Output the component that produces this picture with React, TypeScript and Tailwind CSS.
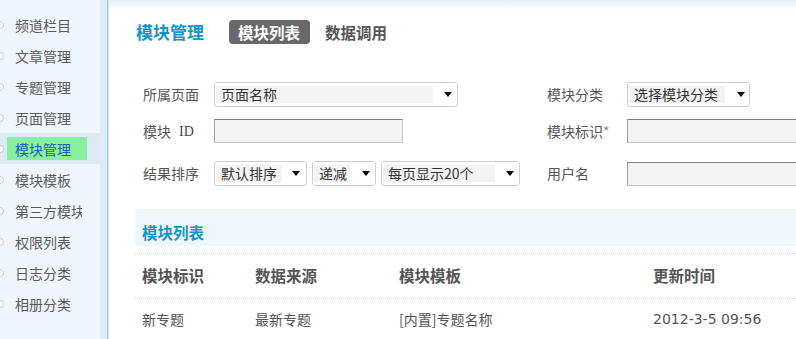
import React from "react";

const Arrow = () => (
  <span className="inline-block w-0 h-0 border-l-[4px] border-r-[4px] border-t-[5px] border-l-transparent border-r-transparent border-t-black" />
);

function Select({
  outer,
  inner,
  text,
  mr,
}: {
  outer: string;
  inner: string;
  text: string;
  mr: string;
}) {
  return (
    <div
      className={`flex items-center h-[25px] border border-[#cfcfcf] rounded-[3px] bg-white pl-[1px] shrink-0 ${outer}`}
    >
      <span
        className={`h-[17px] flex items-center pl-[5px] bg-[#f3f3f3] text-[#333] text-[14px] leading-[17px] whitespace-nowrap ${inner}`}
      >
        {text}
      </span>
      <span className={`ml-auto flex ${mr}`}>
        <Arrow />
      </span>
    </div>
  );
}

function Input({ w }: { w: string }) {
  return (
    <div
      className={`h-[24px] shrink-0 bg-[#f3f3f3] border border-[#c8c8c8] border-t-[#808080] border-l-[#a0a0a0] ${w}`}
    />
  );
}

const sideItems = [
  "频道栏目",
  "文章管理",
  "专题管理",
  "页面管理",
  "模块管理",
  "模块模板",
  "第三方模块",
  "权限列表",
  "日志分类",
  "相册分类",
];

export default function App() {
  return (
    <div className="w-[796px] h-[339px] flex overflow-hidden bg-white font-['Noto_Sans_CJK_SC','Noto_Sans',sans-serif]">
      {/* sidebar */}
      <div className="w-[100px] shrink-0 bg-[#eef6fb] pt-[9px]">
        {sideItems.map((t) => {
          const active = t === "模块管理";
          return (
            <div
              key={t}
              className={`h-[31px] flex items-center ${active ? "bg-[#dde9f5]" : ""}`}
            >
              <span className="w-[8px] h-[8px] rounded-full border border-[#c9c9c9] bg-white ml-[-4px] shrink-0" />
              <div
                className={`ml-[3px] w-[80px] h-[23px] pl-[8px] flex items-center ${active ? "bg-[#88eea0] text-[#1e5eae]" : "text-[#5a5a5a]"}`}
              >
                <span className="w-[67px] overflow-hidden whitespace-nowrap text-[14px] leading-[20px]">
                  {t}
                </span>
              </div>
            </div>
          );
        })}
      </div>
      <div className="w-[7px] shrink-0 bg-[#dfecf8]" />
      <div className="w-px shrink-0 bg-[#9ccae4]" />
      <div className="w-px shrink-0 bg-[#cfe4f2]" />

      {/* main */}
      <div className="flex-1 min-w-0 flex flex-col bg-[linear-gradient(to_bottom,#e2eef7,#ffffff_10px)]">
        {/* header */}
        <div className="pl-[27px] pt-[20px] flex items-center h-[44px]">
          <span className="text-[17px] font-bold text-[#1196cc] leading-[22px]">
            模块管理
          </span>
          <span className="ml-[25px] h-[24px] w-[81px] pl-[9px] flex items-center rounded-[4px] bg-[#686868] text-white font-bold text-[15.5px] leading-[20px]">
            模块列表
          </span>
          <span className="ml-[15px] text-[15.5px] font-bold text-[#555] leading-[20px]">
            数据调用
          </span>
        </div>

        {/* form */}
        <div className="mt-[38px] pl-[34px] text-[14px] text-[#555]">
          <div className="flex items-center h-[25px]">
            <div className="w-[404px] flex items-center shrink-0">
              <span className="w-[71px] shrink-0">所属页面</span>
              <Select outer="w-[244px]" inner="w-[217px]" text="页面名称" mr="mr-[5px]" />
            </div>
            <span className="w-[80px] shrink-0">模块分类</span>
            <Select outer="w-[123px]" inner="w-[96px]" text="选择模块分类" mr="mr-[4px]" />
          </div>
          <div className="flex items-center h-[24px] mt-[12px]">
            <div className="w-[404px] flex items-center shrink-0">
              <span className="w-[71px] shrink-0 flex items-center">
                模块
                <span className="ml-[8px] font-['Liberation_Serif',serif] text-[#445]">
                  ID
                </span>
              </span>
              <Input w="w-[189px]" />
            </div>
            <span className="w-[80px] shrink-0">
              模块标识<span className="text-[#8a8a9a]">*</span>
            </span>
            <Input w="w-[200px]" />
          </div>
          <div className="flex items-center h-[25px] mt-[18px]">
            <div className="w-[404px] flex items-center shrink-0">
              <span className="w-[71px] shrink-0">结果排序</span>
              <Select outer="w-[93px]" inner="w-[66px]" text="默认排序" mr="mr-[6px]" />
              <Select outer="ml-[5px] w-[64px]" inner="w-[36px]" text="递减" mr="mr-[5px]" />
              <Select outer="ml-[5px] w-[139px]" inner="w-[112px]" text="每页显示20个" mr="mr-[5px]" />
            </div>
            <span className="w-[80px] shrink-0">用户名</span>
            <Input w="w-[200px]" />
          </div>
        </div>

        {/* list */}
        <div className="ml-[26px] mt-[23px]">
          <div className="h-[37px] bg-[#f0f7fb] pl-[7px] pt-[8px] flex items-center">
            <span className="text-[15.5px] font-bold text-[#1196cc] leading-[20px]">
              模块列表
            </span>
          </div>
          <div className="mt-[7px] border-t border-dotted border-[#c6d8e6]">
            <div className="h-[45px] flex items-center pl-[7px] text-[15.5px] font-bold text-[#555] border-b border-dotted border-[#c6d8e6]">
              <span className="w-[113px] shrink-0">模块标识</span>
              <span className="w-[144px] shrink-0">数据来源</span>
              <span className="w-[254px] shrink-0">模块模板</span>
              <span className="shrink-0">更新时间</span>
            </div>
            <div className="h-[41px] flex items-center pl-[7px] text-[14px] text-[#555]">
              <span className="w-[113px] shrink-0">新专题</span>
              <span className="w-[144px] shrink-0">最新专题</span>
              <span className="w-[254px] shrink-0">[内置]专题名称</span>
              <span className="shrink-0 font-['DejaVu_Sans',sans-serif] text-[14px]">
                2012-3-5 09:56
              </span>
            </div>
          </div>
        </div>
      </div>
    </div>
  );
}
